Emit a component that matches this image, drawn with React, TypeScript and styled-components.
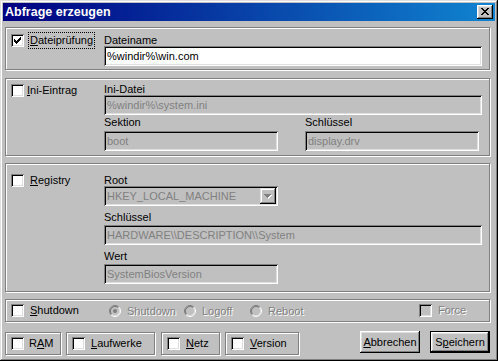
import React from 'react';
import styled, { createGlobalStyle } from 'styled-components';

const Global = createGlobalStyle`
  html, body { margin: 0; padding: 0; background: #c0c0c0; }
  body { font-family: "Liberation Sans", Arial, sans-serif; font-size: 11px; color: #000; }
  * { box-sizing: border-box; }
`;

const Window = styled.div`
  width: 498px;
  height: 361px;
  padding: 3px;
  background: #c0c0c0;
  box-shadow: inset -1px -1px 0 #000, inset 1px 1px 0 #dfdfdf, inset -2px -2px 0 #808080, inset 2px 2px 0 #fff;
  display: flex;
  flex-direction: column;
`;

const TitleBar = styled.div`
  height: 18px;
  flex: none;
  display: flex;
  align-items: center;
  justify-content: space-between;
  padding: 0 2px 0 2px;
  background: linear-gradient(90deg, #000080, #1084d0);
`;

const Title = styled.span`
  color: #fff;
  font-weight: bold;
  font-size: 12.5px;
  line-height: 15px;
`;

const CloseButton = styled.div`
  width: 16px;
  height: 14px;
  background: #c0c0c0;
  box-shadow: inset -1px -1px 0 #000, inset 1px 1px 0 #fff, inset -2px -2px 0 #808080, inset 2px 2px 0 #dfdfdf;
  display: flex;
  align-items: center;
  justify-content: center;
  padding: 0 1px 1px 0;
`;

const Body = styled.div`
  flex: 1;
  display: flex;
  flex-direction: column;
  padding: 6px 5px 0 2px;
`;

const Group = styled.div<{ $h: number; $mt?: number }>`
  height: ${p => p.$h}px;
  margin-top: ${p => p.$mt ?? 0}px;
  flex: none;
  display: flex;
  border: 1px solid #808080;
  box-shadow: inset 1px 1px 0 #fff, 1px 1px 0 #fff;
`;

const Side = styled.div<{ $pt: number }>`
  width: 98px;
  flex: none;
  padding: ${p => p.$pt}px 0 0 5px;
`;

const Fields = styled.div<{ $pt: number }>`
  flex: 1;
  display: flex;
  flex-direction: column;
  padding: ${p => p.$pt}px 7px 0 0;
`;

const Pair = styled.div`
  display: flex;
  gap: 27px;
`;

const Column = styled.div`
  display: flex;
  flex-direction: column;
`;

const FieldLabel = styled.div<{ $mt?: number; $mb?: number }>`
  line-height: 11px;
  height: 11px;
  white-space: nowrap;
  margin-top: ${p => p.$mt ?? 0}px;
  margin-bottom: ${p => p.$mb ?? 0}px;
`;

const TextBox = styled.div<{ $w?: number; $disabled?: boolean }>`
  height: 20px;
  width: ${p => (p.$w ? `${p.$w}px` : '100%')};
  background: ${p => (p.$disabled ? '#c0c0c0' : '#fff')};
  color: ${p => (p.$disabled ? '#808080' : '#000')};
  box-shadow: inset 1px 1px 0 #808080, inset -1px -1px 0 #fff, inset 2px 2px 0 #000, inset -2px -2px 0 #dfdfdf;
  padding: 0 0 0 3px;
  line-height: 20px;
  white-space: nowrap;
  overflow: hidden;
  display: flex;
  align-items: center;
  justify-content: space-between;
`;

const ComboButton = styled.div`
  width: 16px;
  height: 16px;
  margin-right: 2px;
  background: #c0c0c0;
  box-shadow: inset -1px -1px 0 #000, inset 1px 1px 0 #dfdfdf, inset -2px -2px 0 #808080, inset 2px 2px 0 #fff;
  display: flex;
  align-items: center;
  justify-content: center;
`;

const CheckRow = styled.label<{ $gap?: number; $disabled?: boolean }>`
  display: flex;
  align-items: center;
  gap: ${p => p.$gap ?? 5}px;
  white-space: nowrap;
  color: ${p => (p.$disabled ? '#808080' : '#000')};
  text-shadow: ${p => (p.$disabled ? '1px 1px 0 #fff' : 'none')};
  line-height: 13px;
`;

const Box = styled.span<{ $disabled?: boolean }>`
  width: 13px;
  height: 13px;
  flex: none;
  background: ${p => (p.$disabled ? '#c0c0c0' : '#fff')};
  box-shadow: inset 1px 1px 0 #808080, inset -1px -1px 0 #fff, inset 2px 2px 0 #000, inset -2px -2px 0 #dfdfdf;
  display: flex;
  align-items: center;
  justify-content: center;
`;

const Focus = styled.span`
  outline: 1px dotted #000;
  outline-offset: 1px;
`;

const U = styled.span`
  text-decoration: underline;
  text-underline-offset: 1px;
`;

const ShutdownRow = styled.div`
  flex: 1;
  display: flex;
  align-items: center;
`;

const RadioItem = styled.span<{ $w: number; $ml?: number }>`
  width: ${p => p.$w}px;
  margin-left: ${p => p.$ml ?? 0}px;
  flex: none;
  display: flex;
  align-items: center;
  gap: 6px;
  color: #808080;
  text-shadow: 1px 1px 0 #fff;
  white-space: nowrap;
`;

const BottomRow = styled.div`
  margin-top: 10px;
  display: flex;
  align-items: flex-start;
`;

const SmallFrame = styled.div<{ $w: number; $ml: number }>`
  width: ${p => p.$w}px;
  height: 23px;
  margin-left: ${p => p.$ml}px;
  flex: none;
  border: 1px solid #808080;
  box-shadow: inset 1px 1px 0 #fff, 1px 1px 0 #fff;
  display: flex;
  align-items: center;
  padding-left: 5px;
`;

const Spacer = styled.div`
  flex: 1;
`;

const Button = styled.div<{ $default?: boolean; $ml?: number }>`
  width: 60px;
  height: 22px;
  margin-top: -1px;
  margin-left: ${p => p.$ml ?? 0}px;
  flex: none;
  display: flex;
  align-items: center;
  justify-content: center;
  background: #c0c0c0;
  border: ${p => (p.$default ? '1px solid #000' : 'none')};
  box-shadow: inset -1px -1px 0 #000, inset 1px 1px 0 #fff, inset -2px -2px 0 #808080, inset 2px 2px 0 #dfdfdf;
  line-height: 13px;
`;

const CheckMark = () => (
  <svg width="7" height="7" viewBox="0 0 7 7" shapeRendering="crispEdges">
    <path d="M0 2H1V3H2V4H3V3H4V2H5V1H6V0H7V3H6V4H5V5H4V6H3V7H2V6H1V5H0Z" fill="#000" />
  </svg>
);

const CloseIcon = () => (
  <svg width="8" height="7" viewBox="0 0 8 7" shapeRendering="crispEdges">
    <path
      d="M0 0H2V1H3V2H5V1H6V0H8V1H7V2H6V3H5V4H6V5H7V6H8V7H6V6H5V5H3V6H2V7H0V6H1V5H2V4H3V3H2V2H1V1H0Z"
      fill="#000"
    />
  </svg>
);

const ArrowIcon = () => (
  <svg width="8" height="5" viewBox="0 0 8 5" shapeRendering="crispEdges">
    <path d="M1 1H8V2H7V3H6V4H5V5H4V4H3V3H2V2H1Z" fill="#fff" />
    <path d="M0 0H7V1H6V2H5V3H4V4H3V3H2V2H1V1H0Z" fill="#808080" />
  </svg>
);

const RadioIcon = ({ selected }: { selected?: boolean }) => (
  <svg width="12" height="12" viewBox="0 0 12 12">
    <circle cx="6" cy="6" r="5" fill="#c0c0c0" />
    <path d="M2.11 9.89A5.5 5.5 0 0 1 9.89 2.11" fill="none" stroke="#808080" strokeWidth="1" />
    <path d="M9.89 2.11A5.5 5.5 0 0 1 2.11 9.89" fill="none" stroke="#fff" strokeWidth="1" />
    <path d="M2.82 9.18A4.5 4.5 0 0 1 9.18 2.82" fill="none" stroke="#000" strokeOpacity="0.35" strokeWidth="1" />
    <path d="M9.18 2.82A4.5 4.5 0 0 1 2.82 9.18" fill="none" stroke="#dfdfdf" strokeWidth="1" />
    {selected && <circle cx="6" cy="6" r="2" fill="#808080" />}
  </svg>
);

type CheckProps = {
  label: React.ReactNode;
  checked?: boolean;
  disabled?: boolean;
  focus?: boolean;
  gap?: number;
};

const Check = ({ label, checked, disabled, focus, gap }: CheckProps) => (
  <CheckRow $gap={gap} $disabled={disabled}>
    <Box $disabled={disabled}>{checked && <CheckMark />}</Box>
    {focus ? <Focus>{label}</Focus> : <span>{label}</span>}
  </CheckRow>
);

export default function App() {
  return (
    <>
      <Global />
      <Window>
        <TitleBar>
          <Title>Abfrage erzeugen</Title>
          <CloseButton>
            <CloseIcon />
          </CloseButton>
        </TitleBar>
        <Body>
          <Group $h={43}>
            <Side $pt={6}>
              <Check checked focus gap={6} label={<><U>D</U>ateiprüfung</>} />
            </Side>
            <Fields $pt={7}>
              <FieldLabel>Dateiname</FieldLabel>
              <TextBox>%windir%\win.com</TextBox>
            </Fields>
          </Group>

          <Group $h={78} $mt={8}>
            <Side $pt={5}>
              <Check gap={3} label={<><U>I</U>ni-Eintrag</>} />
            </Side>
            <Fields $pt={5}>
              <FieldLabel>Ini-Datei</FieldLabel>
              <TextBox $disabled>%windir%\system.ini</TextBox>
              <Pair>
                <Column>
                  <FieldLabel $mt={2} $mb={3}>Sektion</FieldLabel>
                  <TextBox $disabled $w={174}>boot</TextBox>
                </Column>
                <Column>
                  <FieldLabel $mt={2} $mb={3}>Schlüssel</FieldLabel>
                  <TextBox $disabled $w={174}>display.drv</TextBox>
                </Column>
              </Pair>
            </Fields>
          </Group>

          <Group $h={129} $mt={7}>
            <Side $pt={10}>
              <Check gap={6} label={<><U>R</U>egistry</>} />
            </Side>
            <Fields $pt={11}>
              <FieldLabel>Root</FieldLabel>
              <TextBox $disabled $w={174}>
                HKEY_LOCAL_MACHINE
                <ComboButton>
                  <ArrowIcon />
                </ComboButton>
              </TextBox>
              <FieldLabel $mt={6} $mb={2}>Schlüssel</FieldLabel>
              <TextBox $disabled>HARDWARE\\DESCRIPTION\\System</TextBox>
              <FieldLabel $mt={6} $mb={2}>Wert</FieldLabel>
              <TextBox $disabled $w={174}>SystemBiosVersion</TextBox>
            </Fields>
          </Group>

          <Group $h={23} $mt={7}>
            <ShutdownRow>
              <Side $pt={0}>
                <Check gap={6} label={<><U>S</U>hutdown</>} />
              </Side>
              <RadioItem $w={75} $ml={5}>
                <RadioIcon selected />
                Shutdown
              </RadioItem>
              <RadioItem $w={66}>
                <RadioIcon />
                Logoff
              </RadioItem>
              <RadioItem $w={169}>
                <RadioIcon />
                Reboot
              </RadioItem>
              <Check disabled gap={6} label="Force" />
            </ShutdownRow>
          </Group>

          <BottomRow>
            <SmallFrame $w={56} $ml={0}>
              <Check gap={5} label={<>R<U>A</U>M</>} />
            </SmallFrame>
            <SmallFrame $w={89} $ml={5}>
              <Check gap={6} label={<><U>L</U>aufwerke</>} />
            </SmallFrame>
            <SmallFrame $w={59} $ml={6}>
              <Check gap={6} label={<><U>N</U>etz</>} />
            </SmallFrame>
            <SmallFrame $w={74} $ml={5}>
              <Check gap={6} label={<><U>V</U>ersion</>} />
            </SmallFrame>
            <Spacer />
            <Button>
              <span>
                <U>A</U>bbrechen
              </span>
            </Button>
            <Button $default $ml={10}>
              <span>
                S<U>p</U>eichern
              </span>
            </Button>
          </BottomRow>
        </Body>
      </Window>
    </>
  );
}
